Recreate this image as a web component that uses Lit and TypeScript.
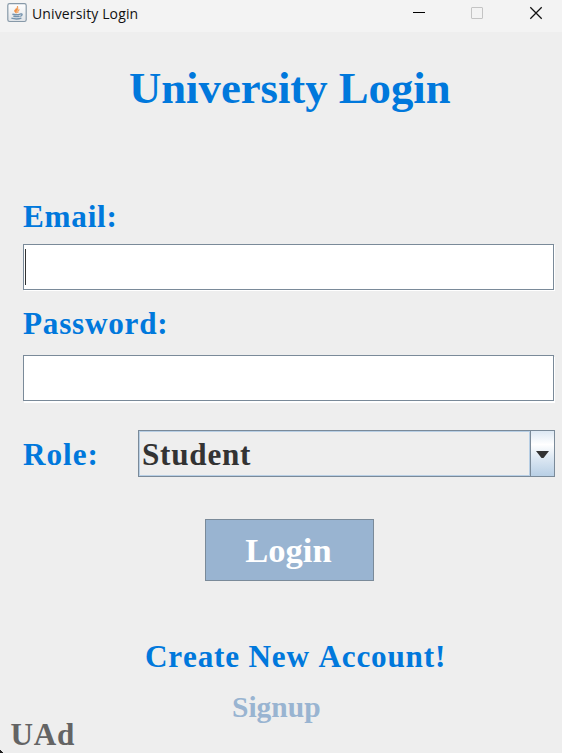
import { LitElement, html, css } from "lit";
import { customElement } from "lit/decorators.js";

@customElement("title-bar")
class TitleBar extends LitElement {
  static styles = css`
    :host {
      display: flex;
      height: 32px;
      background: #f3f3f3;
      color: #111;
      font-family: "Open Sans", "Noto Sans", sans-serif;
      font-weight: 400;
    }
    .icon { width: 20px; height: 20px; margin: 3px 0 0 7px; flex: none; }
    .title {
      margin-left: 5px;
      font-size: 14px;
      line-height: 28px;
      letter-spacing: 0.13px;
      white-space: nowrap;
      flex: 1;
    }
    .controls { width: 149px; height: 32px; flex: none; }
  `;
  render() {
    return html`
      <svg class="icon" viewBox="0 0 20 20" fill="none">
        <defs>
          <linearGradient id="face" x1="0" y1="0" x2="0" y2="1">
            <stop offset="0" stop-color="#ffffff" />
            <stop offset="1" stop-color="#dfe3e7" />
          </linearGradient>
        </defs>
        <rect x="0.8" y="0.7" width="18.4" height="17.8" rx="1.8" fill="url(#face)" stroke="#8799a8" stroke-width="1.2" />
        <path d="M10.5 3C11.3 5.2 7.2 6.2 7.6 8C7.8 9 8.6 9.6 9.2 10.2C8.8 8.4 11.8 6.4 10.5 3Z" fill="#f08c3c" stroke="#f3a15e" stroke-width="1" />
        <path d="M12.4 6.4C10.6 7.4 10.4 8.2 10.8 10" stroke="#f3a15e" stroke-width="1.1" />
        <path d="M5.4 11.2Q9.5 12.2 13.2 11.1M6.4 13.2Q9.5 14 12.6 13.2M13.2 11C15.8 10.4 15.6 12.6 13.2 13.3M4.4 15.2Q9.5 16.8 14.4 15.2" stroke="#7593ad" stroke-width="1.4" />
      </svg>
      <div class="title">University Login</div>
      <svg class="controls" viewBox="0 0 149 32" fill="none">
        <path d="M0 12.5H12" stroke="#000" />
        <rect x="58.5" y="7.5" width="11" height="11" rx="0.5" stroke="#c4c4c4" />
        <path d="M117.3 7.3L128.7 18.7M128.7 7.3L117.3 18.7" stroke="#111" stroke-width="1.25" />
      </svg>
    `;
  }
}

@customElement("app-root")
class AppRoot extends LitElement {
  static styles = css`
    :host {
      display: block;
      position: relative;
      width: 562px;
      height: 753px;
      overflow: hidden;
      background: #eeeeee;
      font-family: "Liberation Serif", "Times New Roman", serif;
      font-weight: bold;
      font-kerning: none;
    }
    .form { display: flex; flex-direction: column; align-items: flex-start; }
    .text {
      font-size: 31.2px;
      line-height: 38px;
      height: 36px;
      color: #0078dc;
      white-space: nowrap;
      letter-spacing: 0.75px;
    }
    .heading {
      margin: 31px 0 0 129px;
      font-size: 44.7px;
      line-height: 50px;
      height: 50px;
      letter-spacing: 0;
    }
    .email { margin: 85px 0 0 23px; }
    .password { margin: 15px 0 0 23px; }
    .field {
      box-sizing: border-box;
      display: flex;
      width: 531px;
      height: 46px;
      margin: 10px 0 0 23px;
      border: 1px solid #7a8a99;
      background: #fff;
      box-shadow: 1px 1px 0 #fff;
    }
    .second { margin-top: 14px; box-shadow: 1px 2px 0 #fff; }
    .caret { width: 1px; height: 36px; margin: 4px 0 0 1px; background: #333; }
    .row { display: flex; margin: 29px 0 0 23px; }
    .role { width: 115px; margin-top: 6px; letter-spacing: 1px; }
    .combo {
      box-sizing: border-box;
      display: flex;
      width: 417px;
      height: 47px;
      border: 1px solid #7a8a99;
    }
    .value {
      box-sizing: border-box;
      flex: 1;
      border: 1px solid #b8cfe5;
      padding: 4px 0 0 2px;
    }
    .value .text { color: #333; }
    .drop {
      box-sizing: border-box;
      width: 24px;
      border-left: 1px solid #7a8a99;
      background: linear-gradient(#dde8f3 0%, #fff 30%, #dde8f3 60%, #b8cfe5 100%);
    }
    .arrow { display: block; margin: 20px 0 0 5px; }
    .login {
      box-sizing: border-box;
      width: 169px;
      height: 62px;
      margin: 42px 0 0 205px;
      border: 1px solid #7a8a99;
      background: #99b4d1;
      color: #fff;
      font-size: 34.5px;
      line-height: 61px;
      text-align: center;
      text-indent: -2px;
    }
    .create { margin: 57px 0 0 145px; letter-spacing: 0.81px; }
    .signup {
      margin: 15px 0 0 232px;
      color: #99b4d1;
      font-size: 29.5px;
      line-height: 36px;
      letter-spacing: 0;
    }
    .uad { margin: -9px 0 0 10.5px; color: #646464; letter-spacing: 0.75px; }
    .corner {
      position: absolute;
      left: 0;
      bottom: 0;
      width: 3px;
      height: 3px;
      background: linear-gradient(45deg, #222 50%, transparent 60%);
    }
  `;
  render() {
    return html`
      <title-bar></title-bar>
      <div class="form">
        <div class="text heading">University Login</div>
        <div class="text email">Email:</div>
        <div class="field"><div class="caret"></div></div>
        <div class="text password">Password:</div>
        <div class="field second"></div>
        <div class="row">
          <div class="text role">Role:</div>
          <div class="combo">
            <div class="value"><div class="text">Student</div></div>
            <div class="drop">
              <svg class="arrow" width="13" height="7" viewBox="0 0 13 7"><path d="M0 0H13L7.5 7H5.5Z" fill="#333" /></svg>
            </div>
          </div>
        </div>
        <div class="login">Login</div>
        <div class="text create">Create New Account!</div>
        <div class="text signup">Signup</div>
        <div class="text uad">UAd</div>
      </div>
      <div class="corner"></div>
    `;
  }
}
